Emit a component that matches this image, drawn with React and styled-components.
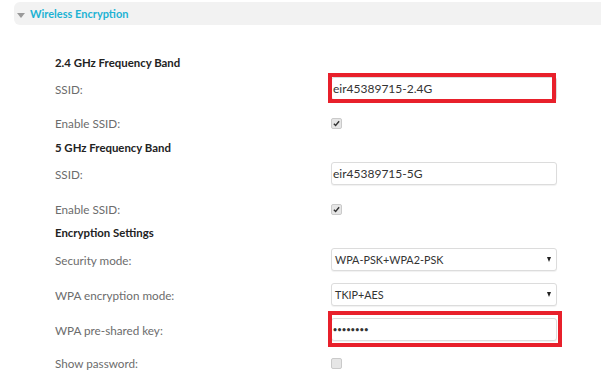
import React from "react";
import styled, { createGlobalStyle } from "styled-components";

const Global = createGlobalStyle`
  body {
    margin: 0;
    background: #fff;
    font-family: Lato, "Open Sans", Arial, sans-serif;
  }
`;

const Page = styled.div`
  width: 602px;
  height: 372px;
  padding-top: 2px;
  box-sizing: border-box;
  overflow: hidden;
`;

const Header = styled.div`
  margin-left: 14px;
  width: 587px;
  height: 23px;
  background: #f2f2f2;
  border-radius: 6px 0 0 6px;
  display: flex;
  align-items: center;
  gap: 5px;
  padding-left: 3px;
  box-sizing: border-box;
`;

const Caret = styled.span`
  width: 0;
  height: 0;
  border-left: 4px solid transparent;
  border-right: 4px solid transparent;
  border-top: 5px solid #9a9a9a;
  margin-top: 3px;
`;

const HeaderTitle = styled.span`
  color: #1db3d4;
  font-weight: 700;
  font-size: 11px;
`;

const Form = styled.div`
  padding-top: 26px;
  padding-left: 55px;
`;

const Row = styled.div`
  display: grid;
  grid-template-columns: 276px 226px;
  align-items: center;
  height: 22px;
  margin-top: ${(p) => p.mt || 0}px;
`;

const Heading = styled.div`
  font-size: 11.4px;
  font-weight: 700;
  color: #222;
`;

const Label = styled.div`
  font-size: 11.7px;
  color: #6c6c6c;
`;

const Control = styled.div`
  position: relative;
  height: 23px;
`;

const Input = styled.div`
  height: 23px;
  box-sizing: border-box;
  border: 1px solid #dcdcdc;
  border-radius: 3px;
  box-shadow: 0 1px 1px rgba(0, 0, 0, 0.06);
  padding: 0 1px;
  display: flex;
  align-items: center;
  font-size: 12px;
  color: #333;
  background: #fff;
`;

const Select = styled(Input)`
  justify-content: space-between;
  padding: 0 5px 0 3px;
  font-size: 10.8px;
`;

const Arrow = styled.span`
  width: 0;
  height: 0;
  border-left: 2.5px solid transparent;
  border-right: 2.5px solid transparent;
  border-top: 5px solid #222;
`;

const Dots = styled.span`
  letter-spacing: 0.4px;
  font-size: 7px;
  font-weight: 700;
  margin-top: -1px;
`;

const Highlight = styled.div`
  position: absolute;
  top: ${(p) => p.t}px;
  left: ${(p) => p.l}px;
  right: ${(p) => p.r}px;
  bottom: ${(p) => p.b}px;
  border: 4px solid #e8202b;
  pointer-events: none;
`;

const Check = styled.span`
  width: 9px;
  height: 9px;
  border: 1px solid #cacaca;
  border-radius: 2px;
  background: #e6e6e6;
  display: flex;
  align-items: center;
  justify-content: center;
  box-sizing: content-box;
`;

const CheckCell = styled.div`
  display: flex;
  align-items: center;
`;

const Tick = () => (
  <svg width="7" height="7" viewBox="0 0 8 8">
    <path d="M1 4.3 L3 6.3 L7 1.5" stroke="#333" strokeWidth="1.6" fill="none" />
  </svg>
);

const Box = ({ checked }) => (
  <CheckCell>
    <Check>{checked && <Tick />}</Check>
  </CheckCell>
);

export default function App() {
  return (
    <Page>
      <Global />
      <Header>
        <Caret />
        <HeaderTitle>Wireless Encryption</HeaderTitle>
      </Header>
      <Form>
        <Row>
          <Heading>2.4 GHz Frequency Band</Heading>
        </Row>
        <Row mt={4}>
          <Label>SSID:</Label>
          <Control>
            <Input>eir45389715-2.4G</Input>
            <Highlight t={-4} l={-3} r={1} b={-3} />
          </Control>
        </Row>
        <Row mt={13}>
          <Label>Enable SSID:</Label>
          <Box checked />
        </Row>
        <Row mt={2}>
          <Heading>5 GHz Frequency Band</Heading>
        </Row>
        <Row mt={4}>
          <Label>SSID:</Label>
          <Control>
            <Input>eir45389715-5G</Input>
          </Control>
        </Row>
        <Row mt={14}>
          <Label>Enable SSID:</Label>
          <Box checked />
        </Row>
        <Row mt={1}>
          <Heading>Encryption Settings</Heading>
        </Row>
        <Row mt={5}>
          <Label>Security mode:</Label>
          <Control>
            <Select>
              WPA-PSK+WPA2-PSK
              <Arrow />
            </Select>
          </Control>
        </Row>
        <Row mt={13}>
          <Label>WPA encryption mode:</Label>
          <Control>
            <Select>
              TKIP+AES
              <Arrow />
            </Select>
          </Control>
        </Row>
        <Row mt={13}>
          <Label>WPA pre-shared key:</Label>
          <Control>
            <Input>
              <Dots>••••••••</Dots>
            </Input>
            <Highlight t={-7} l={-3} r={-5} b={-6} />
          </Control>
        </Row>
        <Row mt={12}>
          <Label>Show password:</Label>
          <Box />
        </Row>
      </Form>
    </Page>
  );
}
